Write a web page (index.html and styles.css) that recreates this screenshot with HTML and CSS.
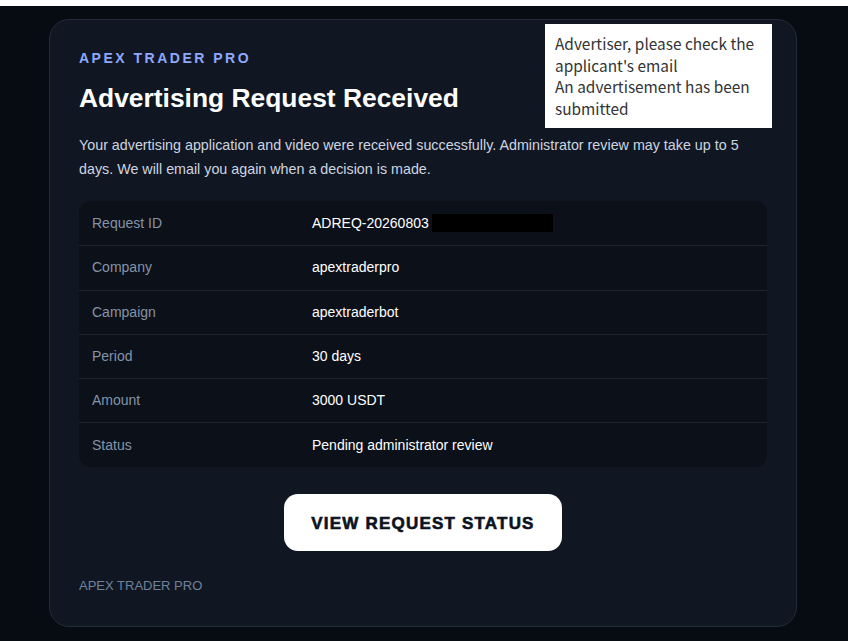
FILE: index.html
```html
<!DOCTYPE html>
<html>
<head>
<meta charset="utf-8">
<link rel="stylesheet" href="styles.css">
</head>
<body>
<div class="strip"></div>
<div class="page">
  <div class="card">
    <div class="brand">APEX TRADER PRO</div>
    <h1 class="title">Advertising Request Received</h1>
    <p class="intro">Your advertising application and video were received successfully. Administrator review may take up to 5 days. We will email you again when a decision is made.</p>
    <div class="table">
      <div class="row"><div class="label">Request ID</div><div class="value">ADREQ-20260803<span class="redact"></span></div></div>
      <div class="row"><div class="label">Company</div><div class="value">apextraderpro</div></div>
      <div class="row"><div class="label">Campaign</div><div class="value">apextraderbot</div></div>
      <div class="row"><div class="label">Period</div><div class="value">30 days</div></div>
      <div class="row"><div class="label">Amount</div><div class="value">3000 USDT</div></div>
      <div class="row"><div class="label">Status</div><div class="value">Pending administrator review</div></div>
    </div>
    <div class="actions"><a class="btn">VIEW REQUEST STATUS</a></div>
    <div class="footer">APEX TRADER PRO</div>
    <div class="note">Advertiser, please check the applicant's email<br>An advertisement has been submitted</div>
  </div>
</div>
</body>
</html>
```
FILE: styles.css
```css
html, body {
  margin: 0;
  padding: 0;
  background: #070b12;
  font-family: "Liberation Sans", Arial, sans-serif;
}
.strip {
  height: 6px;
  background: #ffffff;
}
.page {
  height: 635px;
  box-sizing: border-box;
  padding: 13px 0 0 49px;
  background: #070b12;
}
.card {
  position: relative;
  width: 748px;
  height: 608px;
  box-sizing: border-box;
  background: #111722;
  border: 1px solid #232c3a;
  border-radius: 20px;
  padding: 30px 29px 0 29px;
}
.brand {
  font-size: 14px;
  line-height: 16px;
  font-weight: bold;
  letter-spacing: 2.5px;
  color: #8ea8ff;
}
.title {
  margin: 16px 0 0 0;
  font-size: 26.4px;
  line-height: 32px;
  font-weight: bold;
  color: #ffffff;
}
.intro {
  margin: 19px 0 0 0;
  font-size: 14.3px;
  line-height: 24px;
  color: #cdd5e0;
}
.table {
  margin-top: 20px;
  background: #0b1019;
  border-radius: 12px;
  overflow: hidden;
}
.row {
  display: grid;
  grid-template-columns: 220px 1fr;
  height: 44.3px;
  box-sizing: border-box;
  align-items: center;
  padding-left: 13px;
  padding-bottom: 1px;
  font-size: 14px;
}
.row + .row {
  border-top: 1px solid #1d2431;
}
.label {
  color: #8593a8;
}
.value {
  color: #ffffff;
  display: flex;
  align-items: center;
}
.redact {
  display: inline-block;
  width: 121px;
  height: 18px;
  background: #000000;
  margin-left: 3px;
}
.actions {
  display: flex;
  justify-content: center;
  margin-top: 27px;
}
.btn {
  display: flex;
  align-items: center;
  justify-content: center;
  width: 278px;
  height: 57px;
  box-sizing: border-box;
  padding-top: 3px;
  background: #ffffff;
  border-radius: 14px;
  color: #0b1220;
  font-size: 17px;
  font-weight: bold;
  letter-spacing: 1.2px;
  -webkit-text-stroke: 0.6px #0b1220;
}
.footer {
  margin-top: 27px;
  font-size: 13px;
  line-height: 16px;
  color: #6f819b;
}
.note {
  position: absolute;
  top: 4px;
  left: 495px;
  width: 227px;
  height: 104px;
  box-sizing: border-box;
  background: #ffffff;
  padding: 9px 8px 0 10px;
  font-family: "Noto Sans CJK KR", "Noto Sans", sans-serif;
  font-size: 15.4px;
  line-height: 21.7px;
  color: #333333;
}
```
